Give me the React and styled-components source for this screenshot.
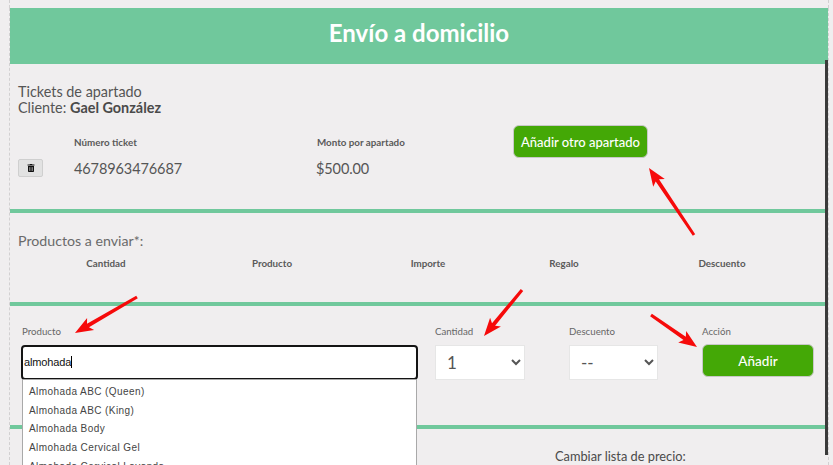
import React from "react";
import styled, { createGlobalStyle } from "styled-components";
import { FaTrashAlt } from "react-icons/fa";

const Global = createGlobalStyle`
  html, body { margin: 0; padding: 0; height: 465px; overflow: hidden; background: #f0eeef; }
  * { box-sizing: border-box; }
`;

const Page = styled.div`
  position: relative;
  width: 833px;
  height: 465px;
  overflow: hidden;
  padding: 8px 4px 0 9px;
  font-family: Lato, "Liberation Sans", sans-serif;
  color: #4d4d4d;
`;
const Frame = styled.div`
  width: 820px;
  height: 457px;
  border-left: 1px dashed #d2d0d1;
  border-right: 1px dashed #d2d0d1;
  position: relative;
`;
const PageEdge = styled.div`
  position: absolute;
  left: 9px;
  top: 0;
  width: 820px;
  height: 8px;
  border-left: 1px dashed #d2d0d1;
  border-right: 1px dashed #d2d0d1;
`;
const Scrollbar = styled.div`
  position: absolute;
  right: 0;
  top: 52px;
  width: 3px;
  height: 395px;
  background: #3a3a3a;
`;
const Header = styled.h1`
  margin: 0;
  height: 56px;
  background: #70c89c;
  color: #fff;
  font-size: 24px;
  font-weight: 700;
  line-height: 50px;
  text-align: center;
`;
const Section = styled.section`
  width: 816px;
  height: ${(p) => p.$h}px;
  border-bottom: 4px solid #70c89c;
  padding: ${(p) => p.$pad || "0"};
`;
const Heading = styled.div`
  font-size: 14.4px;
  line-height: 16px;
  color: #555;
  b { font-weight: 700; color: #4a4a4a; }
`;
const TicketGrid = styled.div`
  display: grid;
  grid-template-columns: 56px 243px 196px auto;
  grid-template-rows: 20px 32px;
  margin-top: 16px;
  align-items: center;
`;
const ColLabel = styled.div`
  font-size: 9.8px;
  font-weight: 700;
  color: #5a5a5a;
`;
const Value = styled.div`
  font-size: 14.5px;
  letter-spacing: -0.1px;
  color: #555;
  margin-left: ${(p) => p.$ml || 0}px;
`;
const TrashBtn = styled.button`
  width: 25px;
  height: 18px;
  padding: 0;
  border: 1px solid #cfcfcf;
  border-radius: 2px;
  background: #e2e2e2;
  color: #111;
  font-size: 8px;
  display: flex;
  align-items: center;
  justify-content: center;
`;
const GreenBtn = styled.button`
  width: ${(p) => p.$w}px;
  height: ${(p) => p.$h}px;
  border: 1px solid #c8c8c8;
  border-radius: 6px;
  background: #44a806;
  color: #fff;
  font-family: Lato, sans-serif;
  font-size: ${(p) => p.$size}px;
  font-weight: 500;
  padding: 0;
`;
const TopBtnCell = styled.div`
  grid-row: 1;
  grid-column: 4;
  align-self: start;
  margin-top: -7px;
`;
const Subtitle = styled.div`
  font-size: 14.2px;
  line-height: 18px;
  color: #6a6a6a;
  padding-left: 8px;
`;
const ProductCols = styled.div`
  display: grid;
  grid-template-columns: 176px 156px 156px 116px 200px;
  padding-left: 8px;
  margin-top: 6px;
`;
const ProductCol = styled.div`
  font-size: 9.8px;
  font-weight: 700;
  line-height: 14px;
  text-align: center;
  color: #5a5a5a;
`;
const FormGrid = styled.div`
  display: grid;
  grid-template-columns: 414px 134px 133px 112px;
  grid-template-rows: 13px 36px;
  row-gap: 7px;
  padding-left: 11px;
`;
const FormLabel = styled.label`
  font-size: 9.7px;
  line-height: 13px;
  color: #666;
  padding-left: ${(p) => p.$pl || 0}px;
`;
const SearchWrap = styled.div`
  position: relative;
  width: 397px;
`;
const Search = styled.div`
  height: 35px;
  width: 397px;
  background: #fff;
  border: 2px solid #141414;
  border-radius: 4px;
  font-family: "Liberation Sans", sans-serif;
  font-size: 11px;
  letter-spacing: -0.15px;
  line-height: 31px;
  padding-left: 1px;
  color: #111;
  &::after {
    content: "";
    display: inline-block;
    width: 1px;
    height: 12px;
    background: #000;
    vertical-align: -2px;
  }
`;
const Menu = styled.ul`
  position: absolute;
  left: 1px;
  top: 34px;
  width: 395px;
  height: 90px;
  margin: 0;
  padding: 3px 0 0 6px;
  list-style: none;
  background: #fff;
  border: 1px solid #a9a9a9;
  border-bottom: 0;
  overflow: hidden;
  z-index: 2;
`;
const MenuItem = styled.li`
  height: 18.7px;
  font-family: "Liberation Sans", sans-serif;
  font-size: 10px;
  letter-spacing: 0.42px;
  line-height: 18px;
  color: #444;
  white-space: nowrap;
`;
const Select = styled.select`
  height: 35px;
  width: ${(p) => p.$w}px;
  background: #fff;
  border: 1px solid #e6e6e6;
  font-family: Lato, sans-serif;
  font-size: 17px;
  color: #555;
  padding-left: 7px;
`;
const ActionCell = styled.div`
  margin-top: -1px;
`;
const Bottom = styled.div`
  padding: 17px 0 0 545px;
  font-size: 12.8px;
  line-height: 20px;
  color: #4a4a4a;
`;
const Arrows = styled.svg`
  position: absolute;
  left: 0;
  top: 0;
  pointer-events: none;
  z-index: 5;
`;

const arrowData = [
  [694, 235, 649, 168],
  [137, 297, 75, 333],
  [522, 290, 484, 336],
  [651, 315, 697, 347],
];

function arrowPoints([x1, y1, x2, y2]) {
  const len = Math.hypot(x2 - x1, y2 - y1);
  const ux = (x2 - x1) / len;
  const uy = (y2 - y1) / len;
  const nx = -uy;
  const ny = ux;
  const at = (back, side) => `${(x2 - ux * back + nx * side).toFixed(1)},${(y2 - uy * back + ny * side).toFixed(1)}`;
  return [at(0, 0), at(18, 7), at(15, 2), at(len, 1.5), at(len, -1.5), at(15, -2), at(18, -7)].join(" ");
}

const items = [
  "Almohada ABC (Queen)",
  "Almohada ABC (King)",
  "Almohada Body",
  "Almohada Cervical Gel",
  "Almohada Cervical Lavanda",
];

export default function App() {
  return (
    <Page>
      <Global />
      <PageEdge />
      <Frame>
        <Scrollbar />
        <Header>Envío a domicilio</Header>
        <Section $h={149} $pad="20px 0 0 8px">
          <Heading>
            Tickets de apartado
            <br />
            Cliente: <b>Gael González</b>
          </Heading>
          <TicketGrid>
            <span />
            <ColLabel>Número ticket</ColLabel>
            <ColLabel>Monto por apartado</ColLabel>
            <TopBtnCell>
              <GreenBtn $w={135} $h={33} $size={13}>Añadir otro apartado</GreenBtn>
            </TopBtnCell>
            <TrashBtn aria-label="Eliminar"><FaTrashAlt /></TrashBtn>
            <Value>4678963476687</Value>
            <Value $ml={-1}>$500.00</Value>
          </TicketGrid>
        </Section>
        <Section $h={93} $pad="19px 0 0 0">
          <Subtitle>Productos a enviar*:</Subtitle>
          <ProductCols>
            <ProductCol>Cantidad</ProductCol>
            <ProductCol>Producto</ProductCol>
            <ProductCol>Importe</ProductCol>
            <ProductCol>Regalo</ProductCol>
            <ProductCol>Descuento</ProductCol>
          </ProductCols>
        </Section>
        <Section $h={123} $pad="19px 0 0 0">
          <FormGrid>
            <FormLabel $pl={1}>Producto</FormLabel>
            <FormLabel>Cantidad</FormLabel>
            <FormLabel>Descuento</FormLabel>
            <FormLabel>Acción</FormLabel>
            <SearchWrap>
              <Search>almohada</Search>
              <Menu>
                {items.map((t) => (
                  <MenuItem key={t}>{t}</MenuItem>
                ))}
              </Menu>
            </SearchWrap>
            <Select $w={90} defaultValue="1">
              <option>1</option>
              <option>2</option>
            </Select>
            <Select $w={89} defaultValue="--">
              <option>--</option>
              <option>5%</option>
            </Select>
            <ActionCell>
              <GreenBtn $w={112} $h={33} $size={13.5}>Añadir</GreenBtn>
            </ActionCell>
          </FormGrid>
        </Section>
        <Bottom>Cambiar lista de precio:</Bottom>
      </Frame>
      <Arrows width="833" height="465" viewBox="0 0 833 465">
        {arrowData.map((a) => (
          <polygon key={a.join()} points={arrowPoints(a)} fill="#f60a0a" />
        ))}
      </Arrows>
    </Page>
  );
}
